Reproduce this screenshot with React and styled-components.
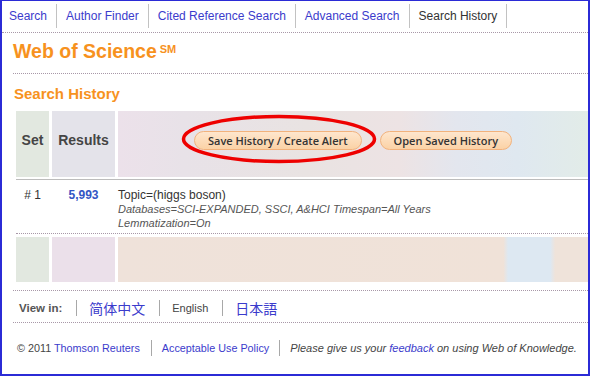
import React from 'react';
import styled, { createGlobalStyle } from 'styled-components';

const GlobalStyle = createGlobalStyle`
  html, body { margin: 0; padding: 0; background: #fff; }
  body { font-family: "Liberation Sans", Arial, sans-serif; }
  * { box-sizing: border-box; }
`;

const BLUE = '#3b3bcc';
const ORANGE = '#f7921e';
const DOT = '1px dotted #a898a8';

const Frame = styled.div`
  position: relative;
  width: 590px;
  height: 376px;
  border: 2px solid #2b2bd6;
  border-top-width: 1px;
  background: #fff;
  display: flex;
  flex-direction: column;
  overflow: hidden;
`;

const Nav = styled.nav`
  display: flex;
  height: 32px;
  padding-top: 3px;
  border-bottom: ${DOT};
`;

const NavItem = styled.a`
  display: block;
  height: 24px;
  line-height: 24px;
  padding: 0 9px;
  border-right: 1px solid #c2c2c2;
  font-size: 12px;
  color: ${p => (p.$active ? '#333' : BLUE)};
  text-decoration: none;
  &:first-child { padding-left: 7px; }
`;

const Title = styled.h1`
  margin: 7px 0 0 11px;
  padding-bottom: 11px;
  border-bottom: ${DOT};
  font: bold 19.5px/22px "Liberation Sans", Arial, sans-serif;
  color: ${ORANGE};
`;

const Mark = styled.span`
  display: inline-block;
  vertical-align: top;
  margin: 4px 0 0 3px;
  font-size: 11px;
  line-height: 10px;
`;

const Heading = styled.h2`
  margin: 11px 0 0 12px;
  font: bold 15px/18px "Liberation Sans", Arial, sans-serif;
  color: ${ORANGE};
`;

const Table = styled.div`
  margin: 8px 0 0 14px;
  display: flex;
  flex-direction: column;
`;

const Grid = styled.div`
  display: grid;
  grid-template-columns: 33px 63px 1fr;
  column-gap: 3px;
`;

const HeadRow = styled(Grid)`
  height: 66px;
`;

const ShadeCell = styled.div`
  display: flex;
  align-items: center;
  justify-content: center;
  padding-bottom: 8px;
  background: ${p => p.$bg};
  font: bold 14px "Liberation Sans", Arial, sans-serif;
  color: #454545;
`;

const Rule = styled.div`
  margin-top: 2px;
  height: 1px;
  background: #bcbcbc;
`;

const DataRow = styled(Grid)`
  padding: 8px 0 3px;
  border-bottom: ${DOT};
  font-size: 12px;
  line-height: 14px;
  color: #333;
`;

const Num = styled.div`
  text-align: center;
  color: ${p => (p.$link ? '#3355c4' : '#333')};
  font-weight: ${p => (p.$link ? 'bold' : 'normal')};
`;

const Detail = styled.div`
  font-size: 11px;
  font-style: italic;
  color: #555;
`;

const FootRow = styled(Grid)`
  margin-top: 3px;
  height: 45px;
`;

const Buttons = styled.div`
  display: flex;
  gap: 18px;
`;

const Pill = styled.button`
  height: 19px;
  padding: 0 13px;
  border: 1px solid #f2b27c;
  border-radius: 10px;
  background: linear-gradient(#fee6cd, #fbd2a6);
  font: 600 11px/17px "Open Sans", sans-serif;
  color: #333;
  cursor: pointer;
`;

const Circle = styled.svg`
  position: absolute;
  left: 177px;
  top: 112px;
  width: 200px;
  height: 52px;
  pointer-events: none;
`;

const ViewIn = styled.div`
  margin: 8px 0 0 11px;
  height: 33px;
  padding: 2px 0 0 6px;
  border-top: ${DOT};
  border-bottom: ${DOT};
  display: flex;
  align-items: center;
  font-size: 11px;
  color: #444;
`;

const Label = styled.span`
  font-weight: bold;
  font-size: 11.5px;
  color: #555;
`;

const Sep = styled.span`
  display: inline-block;
  width: 1px;
  height: 16px;
  background: #a8a8a8;
  margin: 0 ${p => p.$r ?? 12}px 0 ${p => p.$l ?? 14}px;
`;

const Lang = styled.a`
  font-family: "Liberation Sans", ${p => (p.$jp ? '"Noto Sans CJK JP"' : '"Noto Sans CJK SC"')}, sans-serif;
  font-size: 14px;
  color: ${BLUE};
  text-decoration: none;
`;

const Footer = styled.div`
  margin: 17px 0 0 15px;
  display: flex;
  align-items: center;
  height: 16px;
  font-size: 10.8px;
  color: #444;
`;

const Link = styled.a`
  color: ${BLUE};
  text-decoration: none;
`;

const Note = styled.span`
  font-style: italic;
  font-size: 11px;
`;

const headBig = 'linear-gradient(90deg, #ece1ea 0%, #e8e2e8 14%, #e9e3e2 40%, #ede3e4 60%, #e3e6ee 72%, #dfe8f0 85%, #e2ece8 100%)';
const footBig = 'linear-gradient(90deg, #efe2da 0%, #f0e2d8 82%, #dde8f2 83%, #dde8f2 92%, #efe3da 93%, #efe3da 100%)';

export default function App() {
  return (
    <>
      <GlobalStyle />
      <Frame>
        <Nav>
          <NavItem href="#">Search</NavItem>
          <NavItem href="#">Author Finder</NavItem>
          <NavItem href="#">Cited Reference Search</NavItem>
          <NavItem href="#">Advanced Search</NavItem>
          <NavItem $active>Search History</NavItem>
        </Nav>
        <Title>
          Web of Science<Mark>SM</Mark>
        </Title>
        <Heading>Search History</Heading>
        <Table>
          <HeadRow>
            <ShadeCell $bg="#e2e8e0">Set</ShadeCell>
            <ShadeCell $bg="#e4e3ea">Results</ShadeCell>
            <ShadeCell $bg={headBig}>
              <Buttons>
                <Pill>Save History / Create Alert</Pill>
                <Pill>Open Saved History</Pill>
              </Buttons>
            </ShadeCell>
          </HeadRow>
          <Rule />
          <DataRow>
            <Num># 1</Num>
            <Num $link>5,993</Num>
            <div>
              Topic=(higgs boson)
              <Detail>Databases=SCI-EXPANDED, SSCI, A&amp;HCI Timespan=All Years</Detail>
              <Detail>Lemmatization=On</Detail>
            </div>
          </DataRow>
          <FootRow>
            <ShadeCell $bg="#e2e8e0" />
            <ShadeCell $bg="#ebe0ea" />
            <ShadeCell $bg={footBig} />
          </FootRow>
        </Table>
        <ViewIn>
          <Label>View in:</Label>
          <Sep />
          <Lang href="#">简体中文</Lang>
          <Sep />
          <span>English</span>
          <Sep />
          <Lang href="#" $jp>日本語</Lang>
        </ViewIn>
        <Footer>
          <span>© 2011 <Link href="#">Thomson Reuters</Link></span>
          <Sep $l={11} $r={10} />
          <Link href="#">Acceptable Use Policy</Link>
          <Sep $l={10} $r={10} />
          <Note>Please give us your <Link href="#">feedback</Link> on using Web of Knowledge.</Note>
        </Footer>
        <Circle viewBox="0 0 200 52">
          <ellipse cx="100" cy="26" rx="95.5" ry="22.5" fill="none" stroke="#ee0000" strokeWidth="3.5" />
        </Circle>
      </Frame>
    </>
  );
}
